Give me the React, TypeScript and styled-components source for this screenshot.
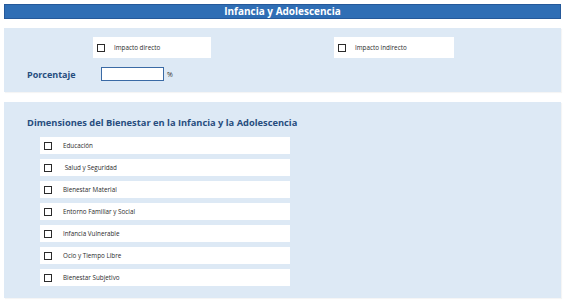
import React from 'react';
import styled, { createGlobalStyle } from 'styled-components';

const GlobalStyle = createGlobalStyle`
  html, body {
    margin: 0;
    padding: 0;
    background: #ffffff;
    font-family: "Open Sans", "Noto Sans", sans-serif;
  }
`;

const impactos = ['Impacto directo', 'Impacto indirecto'];

const dimensiones = [
  'Educación',
  ' Salud y Seguridad',
  'Bienestar Material',
  'Entorno Familiar y Social',
  'Infancia Vulnerable',
  'Ocio y Tiempo Libre',
  'Bienestar Subjetivo',
];

const App: React.FC = () => {
  return (
    <Page>
      <GlobalStyle />
      <HeaderBar>Infancia y Adolescencia</HeaderBar>

      {/* Bloque impacto + porcentaje */}
      <Panel $height={64}>
        <ImpactRow>
          <OptionBox $width={118}>
            <CheckBox />
            <OptionLabel>{impactos[0]}</OptionLabel>
          </OptionBox>
          <OptionBox $width={120}>
            <CheckBox />
            <OptionLabel>{impactos[1]}</OptionLabel>
          </OptionBox>
        </ImpactRow>
        <PercentRow>
          <FieldLabel>Porcentaje</FieldLabel>
          <PercentInput type="text" />
          <PercentSign>%</PercentSign>
        </PercentRow>
      </Panel>

      {/* Bloque dimensiones */}
      <Panel $height={196}>
        <SectionTitle>Dimensiones del Bienestar en la Infancia y la Adolescencia</SectionTitle>
        <DimList>
          {dimensiones.map((d) => (
            <DimRow key={d}>
              <CheckBox />
              <DimLabel>{d}</DimLabel>
            </DimRow>
          ))}
        </DimList>
      </Panel>
    </Page>
  );
};

const Page = styled.div`
  width: 557px;
  padding: 4px;
  display: flex;
  flex-direction: column;
`;

const HeaderBar = styled.div`
  height: 15px;
  background: #2f6eb5;
  border: 1px solid #25599a;
  box-sizing: border-box;
  color: #ffffff;
  font-weight: 700;
  font-size: 10px;
  line-height: 13px;
  text-align: center;
  margin-bottom: 9px;
`;

const Panel = styled.div<{ $height: number }>`
  height: ${(p) => p.$height}px;
  box-sizing: border-box;
  background: #dde9f5;
  margin-bottom: 10px;
  box-shadow: 1px 1px 1px rgba(0, 0, 0, 0.04);
`;

const ImpactRow = styled.div`
  display: flex;
  padding: 9px 0 0 89px;
  gap: 123px;
`;

const OptionBox = styled.div<{ $width: number }>`
  width: ${(p) => p.$width}px;
  height: 21px;
  background: #ffffff;
  display: flex;
  align-items: center;
  padding-left: 4px;
  box-sizing: border-box;
`;

const CheckBox = styled.span`
  width: 6px;
  height: 6px;
  border: 1px solid #2b2b2b;
  background: #ffffff;
  flex-shrink: 0;
`;

const OptionLabel = styled.span`
  font-size: 6.3px;
  color: #2b2b2b;
  margin-left: 9px;
`;

const PercentRow = styled.div`
  display: flex;
  align-items: center;
  padding: 9px 0 0 23px;
`;

const FieldLabel = styled.span`
  width: 74px;
  font-size: 9px;
  font-weight: 700;
  color: #274d7e;
`;

const PercentInput = styled.input`
  width: 63px;
  height: 14px;
  box-sizing: border-box;
  border: 1px solid #3a6aa5;
  background: #ffffff;
  padding: 0;
  margin: 0;
`;

const PercentSign = styled.span`
  font-size: 7px;
  color: #333333;
  margin-left: 3px;
`;

const SectionTitle = styled.div`
  font-size: 9.3px;
  font-weight: 700;
  color: #274d7e;
  padding: 14px 0 0 23px;
  line-height: 14px;
`;

const DimList = styled.div`
  display: flex;
  flex-direction: column;
  gap: 5px;
  margin: 7px 0 0 36px;
  width: 250px;
`;

const DimRow = styled.div`
  height: 17px;
  background: #ffffff;
  display: flex;
  align-items: center;
  padding-left: 4px;
  box-sizing: border-box;
`;

const DimLabel = styled.span`
  font-size: 6.3px;
  color: #2b2b2b;
  margin-left: 11px;
  white-space: pre;
`;

export default App;
